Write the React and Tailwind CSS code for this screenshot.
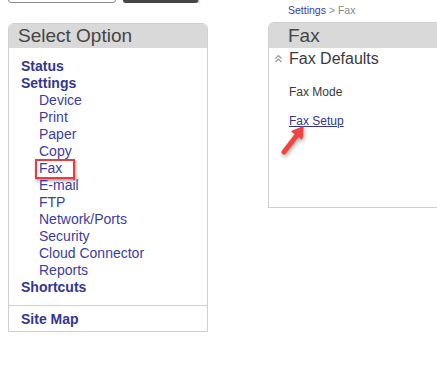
import React from 'react'

const MENU = [
  { label: 'Status', bold: true },
  { label: 'Settings', bold: true },
  { label: 'Device' },
  { label: 'Print' },
  { label: 'Paper' },
  { label: 'Copy' },
  { label: 'Fax', marked: true },
  { label: 'E-mail' },
  { label: 'FTP' },
  { label: 'Network/Ports' },
  { label: 'Security' },
  { label: 'Cloud Connector' },
  { label: 'Reports' },
  { label: 'Shortcuts', bold: true },
]

function MenuItem({ item }) {
  if (item.bold) {
    return <div className="font-bold text-[#33358f]">{item.label}</div>
  }
  return (
    <div className="pl-[18px] text-[#3b3d9e]">
      <span className="relative">
        {item.label}
        {item.marked && (
          <span className="absolute -left-[4px] -top-[1px] w-[40px] h-[20px] border-2 border-[#ec3b3b] shadow-[1px_2px_3px_rgba(0,0,0,0.35)]" />
        )}
      </span>
    </div>
  )
}

function Arrow() {
  return (
    <svg className="absolute left-[10px] top-[101px] drop-shadow-[1px_2px_2px_rgba(0,0,0,0.35)]" width="30" height="34" viewBox="0 0 30 34">
      <path d="M5 28 L17 12.5" stroke="#f0443f" strokeWidth="5" strokeLinecap="round" />
      <path d="M24 3 L13.2 7.4 L22.8 14.6 Z" fill="#f0443f" stroke="#f0443f" strokeWidth="1.5" strokeLinejoin="round" />
    </svg>
  )
}

export default function App() {
  return (
    <div className="flex w-[437px] h-[389px] overflow-hidden bg-white font-['Liberation_Sans',Arial,sans-serif]">
      {/* Left column */}
      <div className="ml-2 w-[200px] shrink-0">
        <div className="flex items-end gap-[7px] h-[3px] overflow-hidden">
          <div className="w-[108px] h-[24px] shrink-0 border border-[#8a8a95] rounded-[3px] bg-white" />
          <div className="w-[75px] h-[24px] shrink-0 bg-[#454545] rounded-[3px] shadow-[1px_1px_2px_rgba(0,0,0,0.4)]" />
        </div>
        <div className="mt-[20px] border border-[#cfcfcf] rounded-t-[6px] overflow-hidden">
          <div className="h-[24px] bg-[#d9d9d9] pl-[9px] text-[19px] leading-[24px] text-[#454545]">Select Option</div>
          <div className="pt-[10px] pb-[9px] pl-[12px] text-[14px] leading-[17px]">
            {MENU.map((m) => (
              <MenuItem key={m.label} item={m} />
            ))}
          </div>
          <div className="border-t border-[#cfcfcf] pt-[5px] pb-[3px] pl-[12px] text-[14px] leading-[17px] font-bold text-[#33358f]">
            Site Map
          </div>
        </div>
      </div>

      {/* Right column */}
      <div className="ml-[60px] w-[200px] shrink-0">
        <div className="pl-[20px] pt-[4px] h-[22px] text-[10.5px] leading-[12px]">
          <span className="text-[#3b3d9e]">Settings</span>
          <span className="text-[#8a8a8a]"> &gt; Fax</span>
        </div>
        <div className="relative h-[186px] border-l border-b border-t border-[#cfcfcf] rounded-tl-[6px] overflow-hidden">
          <div className="h-[25px] bg-[#d9d9d9] pl-[19px] text-[19px] leading-[25px] text-[#454545]">Fax</div>
          <div className="flex items-center h-[22px] pl-[5px] text-[16px] text-[#3a3a3a]">
            <svg width="9" height="9" viewBox="0 0 9 9" className="mr-[6px] mt-[-2px]">
              <path d="M1.5 4.5 L4.5 1.5 L7.5 4.5 M1.5 8 L4.5 5 L7.5 8" fill="none" stroke="#9a9a9a" strokeWidth="1.2" />
            </svg>
            Fax Defaults
          </div>
          <div className="pl-[20px] mt-[15px] text-[12px] leading-[14px] text-[#3a3a3a]">Fax Mode</div>
          <div className="pl-[20px] mt-[15px] text-[12px] leading-[14px] text-[#33358f] underline">Fax Setup</div>
          <Arrow />
        </div>
      </div>
    </div>
  )
}
